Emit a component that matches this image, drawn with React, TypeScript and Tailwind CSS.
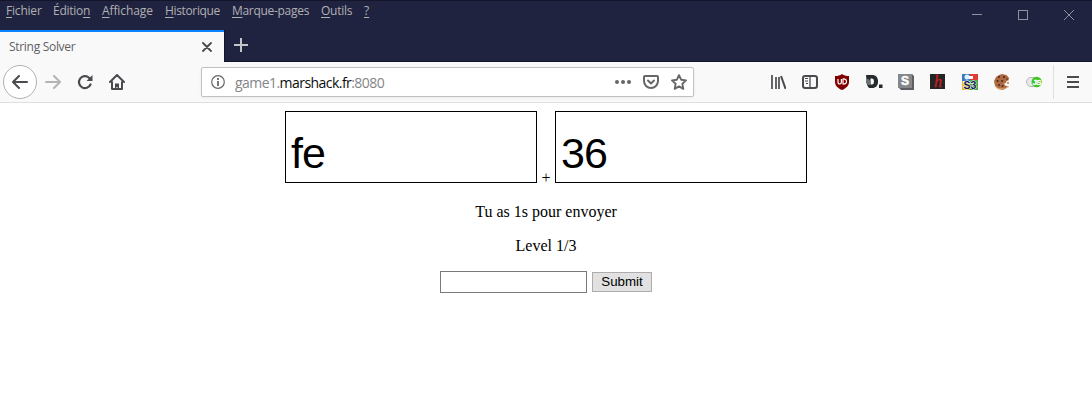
import React from "react";

const MENU = [
  { key: "F", rest: "ichier", before: "", cls: "w-[47px] tracking-[-0.2px]" },
  { key: "n", rest: "", before: "Éditio", cls: "w-[49px] tracking-[-0.25px]" },
  { key: "A", rest: "ffichage", before: "", cls: "w-[63px] tracking-[-0.1px]" },
  { key: "H", rest: "istorique", before: "", cls: "w-[67px] tracking-[-0.35px]" },
  { key: "M", rest: "arque-pages", before: "", cls: "w-[89px] tracking-[-0.3px]" },
  { key: "O", rest: "utils", before: "", cls: "w-[43px] tracking-[-0.25px]" },
  { key: "?", rest: "", before: "", cls: "w-[10px]" },
];

function TitleBar() {
  return (
    <div className="flex h-[30px] justify-between border-t border-[#14152a]">
      <div className="flex pl-[6px] pt-[2px] font-['Open_Sans',sans-serif] text-[12px] leading-4 text-[#b0b0b3]">
        {MENU.map((m) => (
          <div key={m.key} className={`${m.cls} whitespace-nowrap`}>
            {m.before}
            <span className="underline underline-offset-2">{m.key}</span>
            {m.rest}
          </div>
        ))}
      </div>
      <svg width="120" height="29" fill="none" stroke="#92929f" shapeRendering="crispEdges">
        <path d="M0 13.5h10M46.5 9.5h9v9h-9z" />
        <path d="m92 9 10 10M102 9 92 19" shapeRendering="auto" />
      </svg>
    </div>
  );
}

function TabStrip() {
  return (
    <div className="flex h-8">
      <div className="flex w-[224px] items-center justify-between border-t-2 border-[#0a84ff] bg-[#f9f9fa] pl-[9px] pr-3 font-['Open_Sans',sans-serif] text-[12px] tracking-[-0.3px] text-[#5f5f63]">
        <span>String Solver</span>
        <svg width="10" height="10" stroke="#4a4a4f" strokeWidth="1.8" strokeLinecap="round">
          <path d="m1 1 8 8M9 1 1 9" />
        </svg>
      </div>
      <div className="flex flex-1 items-start border-b border-l border-[#14152a] pl-[9px] pt-2">
        <svg width="14" height="14" stroke="#c4c4cb" strokeWidth="2">
          <path d="M7 0v14M0 7h14" />
        </svg>
      </div>
    </div>
  );
}

function AddressBar() {
  return (
    <div className="flex h-[30px] w-[493px] items-center rounded-[2px] border border-[#c1c1c3] bg-white pl-[9px] pr-[6px] shadow-[0_1px_3px_rgba(0,0,0,0.06)]">
      <svg width="14" height="14" viewBox="0 0 14 14" fill="none" stroke="#666669">
        <circle cx="7" cy="7" r="6.3" strokeWidth="1.2" />
        <path d="M7 6v5M7 3v2" strokeWidth="1.8" />
      </svg>
      <span className="ml-[10px] flex-1 whitespace-nowrap font-['Open_Sans',sans-serif] text-[14px] tracking-[-0.55px] text-[#858588]">
        game1.<span className="text-[#0c0c0d]">marshack.fr</span>:8080
      </span>
      <svg width="16" height="16" fill="#666669">
        <circle cx="2" cy="8" r="2" />
        <circle cx="8" cy="8" r="2" />
        <circle cx="14" cy="8" r="2" />
      </svg>
      <svg className="ml-3" width="16" height="16" fill="none" stroke="#666669" strokeWidth="2" strokeLinecap="round" strokeLinejoin="round">
        <path d="M2 2h12q1 0 1 1v4a7 7 0 0 1-14 0V3q0-1 1-1Z" />
        <path d="m5 6.5 3 3 3-3" />
      </svg>
      <svg className="ml-3" width="16" height="16" fill="none" stroke="#666669" strokeWidth="1.9" strokeLinejoin="round">
        <path d="m8 1.2 2.1 4.5 4.9.7-3.6 3.4.9 5L8 12.4l-4.3 2.4.9-5L1 6.4l4.9-.7Z" />
      </svg>
    </div>
  );
}

function Extensions() {
  return (
    <div className="flex items-center gap-4">
      <svg width="16" height="16" fill="none" stroke="#4a4a4f" strokeWidth="2">
        <path d="M2 1v14M6 3v12M9 3v12" strokeWidth="1.7" />
        <path d="m11 2 4.6 12.8" />
      </svg>
      <svg width="16" height="16" fill="none" stroke="#4a4a4f">
        <rect x="1" y="2" width="14" height="12" rx="2.2" strokeWidth="2" />
        <path d="M8 2v12" strokeWidth="1.3" />
        <path d="M3 4.5h3M3 7h3M4 9.5h2" />
      </svg>
      <svg width="16" height="16">
        <path d="M8 0c2 1.5 4 2 7 2v6c0 4-3.5 6.5-7 8-3.500-1.500-7-4-7-8V2c3 0 5-.5 7-2Z" fill="#800000" />
        <path d="M4 5v3q0 2 1.700 2T7.400 8V5M9 5v5q3.500.3 3.500-2.500T9 5Z" fill="none" stroke="#fff" strokeWidth="1.2" />
      </svg>
      <svg width="17" height="16" className="-mr-px">
        <path d="M0 1h6c4 0 6 2.500 6 6.500S10 14 6 14H3L1 11Z" fill="#262b2d" />
        <path d="M4.500 4.500H6q2 .2 2 3t-2 3H4.500Z" fill="#f9f9fa" />
        <path d="M0 5h2.500l2 2v4H2l-2-2Z" fill="#6b7274" />
        <rect x="13" y="10.500" width="3.500" height="3.500" fill="#262b2d" />
      </svg>
      <svg width="16" height="16">
        <path d="M1 0h13l2 2v14H3l-2-2Z" fill="#5c5e63" />
        <path d="M0 0h14v14H0z" fill="#85878b" />
        <text x="3" y="11.300" fill="#fff" stroke="#fff" strokeWidth=".5" className="font-['Liberation_Sans',sans-serif] text-[12px] font-bold">S</text>
      </svg>
      <svg width="16" height="16">
        <path d="M0 0h15v15H0z" fill="#232526" />
        <text x="4" y="13" fill="#c9201e" stroke="#c9201e" strokeWidth=".3" className="font-['Liberation_Serif',serif] text-[16px] italic">h</text>
      </svg>
      <svg width="16" height="16">
        <path d="M0 0h8v8H0z" fill="#397bc0" />
        <path d="M8 0h8v6H8z" fill="#e33c35" />
        <path d="M0 7h8v9H0z" fill="#e9bd26" />
        <path d="M8 6h8v10H8z" fill="#44a652" />
        <circle cx="5" cy="3" r="2.500" fill="#e5f2ff" />
        <path d="M7 2h4v3H7zM1 7h7v2H1z" fill="#fff" />
        <text x="1.500" y="14.500" fill="#10184c" stroke="#fff" strokeWidth="1" paintOrder="stroke" className="font-['Liberation_Sans',sans-serif] text-[10.500px] font-bold">S3</text>
      </svg>
      <svg width="16" height="16">
        <path d="M8 0 12.500 1 15 4l-.5 2.500-2 .5-.5 2-2 .5 1 2 2 .5-.5 2L9 16l-5-1-3-3-1-5 2-4 3-2Z" fill="#ae6b42" />
        <path d="m1 11 3 3 5 .5 2-1-1 2-4 .3-3-1.500Z" fill="#dea76d" />
        <g fill="#4b281d">
          <circle cx="5" cy="3" r="1" /><circle cx="10" cy="3" r="1.100" /><circle cx="3.500" cy="7" r="1.100" />
          <circle cx="8" cy="7" r="1" /><circle cx="5" cy="11" r="1" /><circle cx="8.500" cy="12" r="1" /><circle cx="13" cy="5" r=".8" />
        </g>
        <path d="M13 8h2v2h-2zM13 12h1.500v1.500H13z" fill="#d99459" />
      </svg>
      <svg width="16" height="16">
        <rect x=".5" y="3.500" width="12" height="9" rx="4.500" fill="#e8e8e8" stroke="#b9b9b9" />
        <circle cx="10.700" cy="8" r="5.200" fill="#3fc51b" />
        <text x="6.500" y="11" fill="#fff" stroke="#fff" strokeWidth=".3" className="font-['Liberation_Sans',sans-serif] text-[8px] font-bold tracking-[-0.7px]">JS</text>
      </svg>
    </div>
  );
}

function NavBar() {
  return (
    <div className="flex h-[41px] items-center border-b border-[#dfdfe1] bg-[#f9f9fa] pl-[3px]">
      <div className="flex h-[34px] w-[34px] items-center justify-center rounded-full border border-[#b1b1b3] bg-white">
        <svg width="16" height="16" fill="none" stroke="#4a4a4f" strokeWidth="2" strokeLinecap="round" strokeLinejoin="round">
          <path d="M15 8H1.500M7 2 1 8l6 6" />
        </svg>
      </div>
      <svg className="ml-2" width="16" height="16" fill="none" stroke="#b4b4b7" strokeWidth="2" strokeLinecap="round" strokeLinejoin="round">
        <path d="M1 8h13.500M9 2l6 6-6 6" />
      </svg>
      <svg className="ml-4" width="16" height="16" fill="none" stroke="#4a4a4f" strokeWidth="2.200" strokeLinecap="round">
        <path d="M13.500 10.500A6 6 0 1 1 12 3.700L13 5" />
        <path d="M15.500 1v6h-6Z" fill="#4a4a4f" stroke="none" />
      </svg>
      <svg className="ml-4" width="16" height="16" fill="none" stroke="#4a4a4f" strokeWidth="2" strokeLinecap="round" strokeLinejoin="round">
        <path d="m1 8 7-7 7 7M3 8v7h10V8" />
        <path d="M6 15V9.500h4V15H8.600v-2H7.400v2Z" fill="#4a4a4f" stroke="none" />
      </svg>
      <div className="ml-[76px]"><AddressBar /></div>
      <div className="ml-[76px]"><Extensions /></div>
      <div className="ml-[11px] h-[34px] w-px bg-[#dfdfe1]" />
      <svg className="ml-[13px]" width="12" height="12" stroke="#4a4a4f" strokeWidth="2">
        <path d="M0 1h12M0 6h12M0 11h12" />
      </svg>
    </div>
  );
}

function ValueBox({ value }: { value: string }) {
  return (
    <div className="h-[72px] w-[252px] border border-black pl-[5px] pt-[16px] font-['Liberation_Sans',sans-serif] text-[43px] leading-[50px] tracking-[-1px]">
      {value}
    </div>
  );
}

export default function App() {
  return (
    <div className="h-screen overflow-hidden bg-white text-black">
      <header className="bg-[#202340]">
        <TitleBar />
        <TabStrip />
        <NavBar />
      </header>
      <main className="flex flex-col items-center pt-2 font-['Liberation_Serif',serif] text-[16px] leading-[18px]">
        <div className="flex items-end">
          <ValueBox value="fe" />
          <span className="w-[18px] text-center leading-[10px]">+</span>
          <ValueBox value="36" />
        </div>
        <p className="mt-5">Tu as 1s pour envoyer</p>
        <p className="mt-4">Level 1/3</p>
        <form className="mt-4 flex items-center gap-[5px]" onSubmit={(e) => e.preventDefault()}>
          <input aria-label="Réponse" className="h-[22px] w-[147px] border border-[#7a7a7a] bg-white px-1 outline-none" />
          <button className="h-5 w-[60px] border border-[#adadad] bg-[#e1e1e1] font-['Liberation_Sans',sans-serif] text-[13.333px] leading-[18px]">
            Submit
          </button>
        </form>
      </main>
    </div>
  );
}
